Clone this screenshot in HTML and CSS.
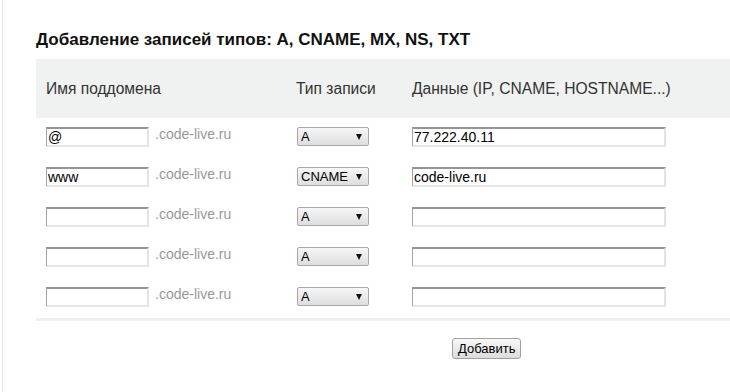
FILE: index.html
```html
<!DOCTYPE html>
<html lang="ru">
<head>
  <meta charset="UTF-8">
  <title>Добавление записей</title>
  <link rel="stylesheet" href="styles.css">
</head>
<body>
  <div class="wrap">
    <h2 class="title">Добавление записей типов: A, CNAME, MX, NS, TXT</h2>
    <form class="records" autocomplete="off">
      <div class="head">
        <span>Имя поддомена</span>
        <span>Тип записи</span>
        <span>Данные (IP, CNAME, HOSTNAME...)</span>
      </div>
      <div class="rows">
        <div class="row">
          <div class="sub"><input type="text" class="name" value="@"><span class="suffix">.code-live.ru</span></div>
          <div class="select"><select><option selected>A</option><option>CNAME</option><option>MX</option><option>NS</option><option>TXT</option></select></div>
          <div><input type="text" class="data" value="77.222.40.11"></div>
        </div>
        <div class="row">
          <div class="sub"><input type="text" class="name" value="www"><span class="suffix">.code-live.ru</span></div>
          <div class="select"><select><option>A</option><option selected>CNAME</option><option>MX</option><option>NS</option><option>TXT</option></select></div>
          <div><input type="text" class="data" value="code-live.ru"></div>
        </div>
        <div class="row">
          <div class="sub"><input type="text" class="name"><span class="suffix">.code-live.ru</span></div>
          <div class="select"><select><option selected>A</option><option>CNAME</option><option>MX</option><option>NS</option><option>TXT</option></select></div>
          <div><input type="text" class="data"></div>
        </div>
        <div class="row">
          <div class="sub"><input type="text" class="name"><span class="suffix">.code-live.ru</span></div>
          <div class="select"><select><option selected>A</option><option>CNAME</option><option>MX</option><option>NS</option><option>TXT</option></select></div>
          <div><input type="text" class="data"></div>
        </div>
        <div class="row">
          <div class="sub"><input type="text" class="name"><span class="suffix">.code-live.ru</span></div>
          <div class="select"><select><option selected>A</option><option>CNAME</option><option>MX</option><option>NS</option><option>TXT</option></select></div>
          <div><input type="text" class="data"></div>
        </div>
      </div>
      <div class="actions">
        <button type="button">Добавить</button>
      </div>
    </form>
  </div>
</body>
</html>
```

FILE: styles.css
```css
body {
  margin: 0;
  font-family: "Liberation Sans", Arial, sans-serif;
  color: #222;
  background: #fff;
}
.wrap {
  margin-left: 2px;
  border-left: 1px solid #e4e4e4;
  min-height: 392px;
  padding-left: 33px;
  box-sizing: border-box;
}
.title {
  margin: 0 0 9px;
  padding-top: 30px;
  font-size: 17px;
  line-height: 20px;
  font-weight: bold;
  color: #111;
}
.head, .row {
  display: grid;
  grid-template-columns: 250px 116px 1fr;
  padding-left: 10px;
}
.head {
  height: 59px;
  align-items: center;
  background: #f0f1f1;
  font-size: 15.6px;
  color: #333;
}
.rows {
  border-bottom: 3px solid #eef0f0;
}
.row {
  padding: 9px 0 11px 10px;
  align-items: start;
}
.sub {
  display: flex;
  align-items: flex-start;
}
input[type="text"] {
  height: 20px;
  box-sizing: border-box;
  padding: 0 1px;
  font-family: inherit;
  font-size: 14px;
  color: #000;
  background: #fff;
  border-style: solid;
  border-width: 2px 2px 2px 1px;
  border-color: #959595 #e3e3e3 #e6e6e6 #a3a3a3;
  outline: none;
}
.name {
  width: 103px;
}
.data {
  width: 254px;
}
.suffix {
  margin-left: 6px;
  font-size: 14px;
  line-height: 14px;
  color: #999;
}
.select {
  position: relative;
  width: 72px;
  margin-left: 1px;
}
.select select {
  appearance: none;
  width: 72px;
  height: 19px;
  padding: 0 0 0 3px;
  font-family: inherit;
  font-size: 13px;
  color: #000;
  border: 1px solid #a9a9a9;
  border-radius: 2px;
  background: linear-gradient(#f7f7f7, #dedede);
}
.select::after {
  content: "";
  position: absolute;
  right: 7px;
  top: 7px;
  border-left: 3px solid transparent;
  border-right: 3px solid transparent;
  border-top: 6px solid #111;
  pointer-events: none;
}
.actions {
  padding: 17px 0 0 416px;
}
button {
  height: 21px;
  padding: 0 5px;
  font-family: inherit;
  font-size: 13px;
  color: #000;
  border: 1px solid #a0a0a0;
  border-radius: 3px;
  background: linear-gradient(#f8f8f8, #dcdcdc);
  cursor: pointer;
}
```
